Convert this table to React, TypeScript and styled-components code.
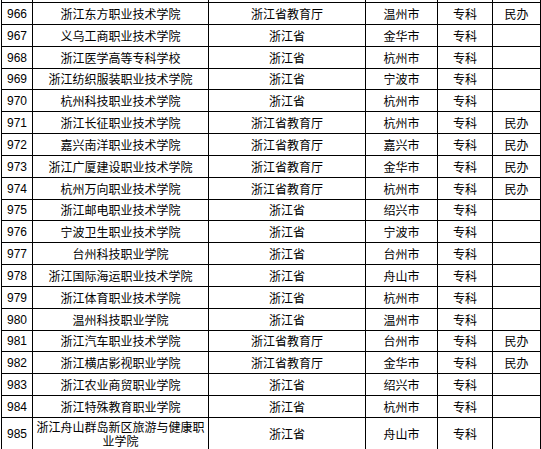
import React from "react";
import styled, { createGlobalStyle } from "styled-components";

const Global = createGlobalStyle`
  html, body { margin: 0; padding: 0; background: #ffffff; }
  body { font-family: "Liberation Sans", "Noto Sans CJK SC", sans-serif; color: #000; }
`;

const COLS = "31px 176px 157px 72px 55px 48px";

const Page = styled.div`
  width: 541px;
  height: 449px;
  overflow: hidden;
  padding-left: 1px;
  box-sizing: border-box;
`;

const Frame = styled.div`
  width: 540px;
  border-left: 1px solid #000;
  box-sizing: border-box;
`;

const Row = styled.div<{ $h: number; $top?: boolean }>`
  display: grid;
  grid-template-columns: ${COLS};
  height: ${(p) => p.$h}px;
  ${(p) => (p.$top ? "border-bottom: 1px solid #000;" : "")}
`;

const Cell = styled.div<{ $tall?: boolean; $bare?: boolean; $num?: boolean }>`
  box-sizing: border-box;
  border-right: 1px solid #000;
  border-bottom: ${(p) => (p.$bare ? "none" : "1px solid #000")};
  display: flex;
  align-items: ${(p) => (p.$tall ? "flex-start" : "center")};
  justify-content: center;
  text-align: center;
  padding: ${(p) => (p.$tall ? "2px 1px 0" : "0 2px")};
  font-family: ${(p) =>
    p.$num
      ? '"Liberation Sans", Arial, sans-serif'
      : '"Noto Sans CJK SC", "Noto Sans CJK TC", sans-serif'};
  font-size: 12px;
  line-height: 14px;
  color: #000;
  overflow: hidden;
  white-space: ${(p) => (p.$tall ? "normal" : "nowrap")};
`;

type Item = [string, string, string, string, string, string];

const data: Item[] = [
  ["966", "浙江东方职业技术学院", "浙江省教育厅", "温州市", "专科", "民办"],
  ["967", "义乌工商职业技术学院", "浙江省", "金华市", "专科", ""],
  ["968", "浙江医学高等专科学校", "浙江省", "杭州市", "专科", ""],
  ["969", "浙江纺织服装职业技术学院", "浙江省", "宁波市", "专科", ""],
  ["970", "杭州科技职业技术学院", "浙江省", "杭州市", "专科", ""],
  ["971", "浙江长征职业技术学院", "浙江省教育厅", "杭州市", "专科", "民办"],
  ["972", "嘉兴南洋职业技术学院", "浙江省教育厅", "嘉兴市", "专科", "民办"],
  ["973", "浙江广厦建设职业技术学院", "浙江省教育厅", "金华市", "专科", "民办"],
  ["974", "杭州万向职业技术学院", "浙江省教育厅", "杭州市", "专科", "民办"],
  ["975", "浙江邮电职业技术学院", "浙江省", "绍兴市", "专科", ""],
  ["976", "宁波卫生职业技术学院", "浙江省", "宁波市", "专科", ""],
  ["977", "台州科技职业学院", "浙江省", "台州市", "专科", ""],
  ["978", "浙江国际海运职业技术学院", "浙江省", "舟山市", "专科", ""],
  ["979", "浙江体育职业技术学院", "浙江省", "杭州市", "专科", ""],
  ["980", "温州科技职业学院", "浙江省", "温州市", "专科", ""],
  ["981", "浙江汽车职业技术学院", "浙江省教育厅", "台州市", "专科", "民办"],
  ["982", "浙江横店影视职业学院", "浙江省教育厅", "金华市", "专科", "民办"],
  ["983", "浙江农业商贸职业学院", "浙江省", "绍兴市", "专科", ""],
  ["984", "浙江特殊教育职业学院", "浙江省", "杭州市", "专科", ""],
  ["985", "浙江舟山群岛新区旅游与健康职业学院", "浙江省", "舟山市", "专科", ""],
];

const heights = [22, 22, 22, 21, 22, 22, 22, 22, 22, 21, 22, 22, 22, 22, 22, 21, 22, 22, 22, 32];

export default function App() {
  return (
    <Page>
      <Global />
      <Frame>
        <Row $h={2} $top>
          {[0, 1, 2, 3, 4, 5].map((i) => (
            <Cell key={i} $bare />
          ))}
        </Row>
        {data.map((r, idx) => {
          const tall = heights[idx] > 22;
          return (
            <Row key={r[0]} $h={heights[idx]}>
              <Cell $num>{r[0]}</Cell>
              <Cell $tall={tall}>{r[1]}</Cell>
              <Cell>{r[2]}</Cell>
              <Cell>{r[3]}</Cell>
              <Cell>{r[4]}</Cell>
              <Cell>{r[5]}</Cell>
            </Row>
          );
        })}
      </Frame>
    </Page>
  );
}
